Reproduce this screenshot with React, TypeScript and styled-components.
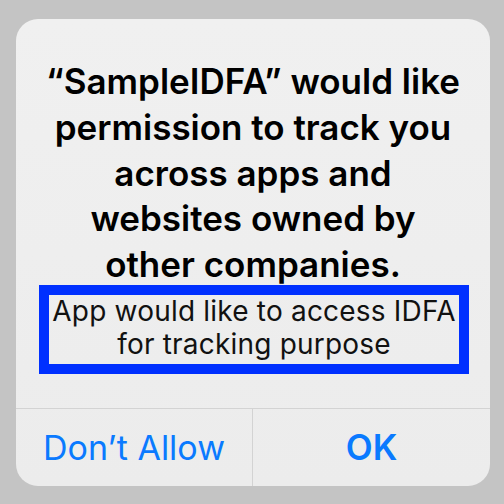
import React from "react";
import styled, { createGlobalStyle } from "styled-components";

const Global = createGlobalStyle`
  html, body { margin: 0; padding: 0; background: #c4c4c4; }
  body { font-family: Inter, "Noto Sans", "Liberation Sans", sans-serif; }
`;

const Screen = styled.div`
  width: 504px;
  height: 504px;
  padding: 19px 0 0 16px;
  box-sizing: border-box;
`;

const Alert = styled.div`
  width: 474px;
  height: 467px;
  border-radius: 22px;
  background: linear-gradient(180deg, #f0f0f0 0%, #ececec 100%);
  display: flex;
  flex-direction: column;
  box-sizing: border-box;
  padding-top: 40px;
  overflow: hidden;
`;

const Title = styled.div`
  font-size: 35px;
  font-weight: 600;
  line-height: 45.75px;
  color: #000;
  text-align: center;
  padding: 0 20px;
`;

const MessageBox = styled.div`
  margin: -3px 0 0 23px;
  width: 430px;
  height: 89px;
  box-sizing: border-box;
  border: 10px solid #0030ff;
  font-size: 28px;
  line-height: 33px;
  color: #111;
  text-align: center;
  letter-spacing: 0.2px;
  white-space: nowrap;
`;

const Actions = styled.div`
  margin-top: auto;
  height: 78px;
  border-top: 1px solid #d3d3d3;
  box-sizing: border-box;
  display: grid;
  grid-template-columns: 237px 1fr;
`;

const ActionButton = styled.button<{ $primary?: boolean; $divider?: boolean }>`
  border: 0;
  background: transparent;
  padding: 0;
  font-family: inherit;
  font-size: ${(p) => (p.$primary ? 35 : 34)}px;
  line-height: 77px;
  color: #0a7aff;
  font-weight: ${(p) => (p.$primary ? 600 : 400)};
  border-right: ${(p) => (p.$divider ? "1px solid #d3d3d3" : "0")};
  text-align: center;
`;

export default function App() {
  return (
    <>
      <Global />
      <Screen>
        <Alert>
          <Title>
            “SampleIDFA” would like
            <br />
            permission to track you
            <br />
            across apps and
            <br />
            websites owned by
            <br />
            other companies.
          </Title>
          <MessageBox>
            App would like to access IDFA
            <br />
            for tracking purpose
          </MessageBox>
          <Actions>
            <ActionButton $divider>Don’t Allow</ActionButton>
            <ActionButton $primary>OK</ActionButton>
          </Actions>
        </Alert>
      </Screen>
    </>
  );
}
